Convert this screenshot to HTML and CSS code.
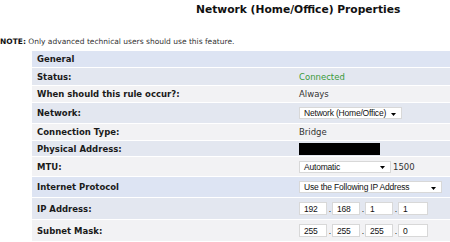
FILE: index.html
```html
<!DOCTYPE html>
<html>
<head>
<meta charset="utf-8">
<link rel="stylesheet" href="styles.css">
</head>
<body>
<div class="page">
  <div class="title">Network (Home/Office) Properties</div>
  <div class="note"><b>NOTE:</b> Only advanced technical users should use this feature.</div>
  <div class="table">
    <div class="row head h16"><div class="label">General</div><div class="value"></div></div>
    <div class="row blue h17"><div class="label">Status:</div><div class="value green">Connected</div></div>
    <div class="row light h16"><div class="label">When should this rule occur?:</div><div class="value">Always</div></div>
    <div class="row blue h20"><div class="label">Network:</div><div class="value"><span class="sel w103"><span class="txt">Network (Home/Office)</span><svg class="arr" width="5" height="3" viewBox="0 0 5 3"><path d="M0 0H5L2.5 3Z" fill="#000"/></svg></span></div></div>
    <div class="row light h16"><div class="label">Connection Type:</div><div class="value">Bridge</div></div>
    <div class="row blue h15"><div class="label">Physical Address:</div><div class="value"><span class="mask"></span></div></div>
    <div class="row light h19"><div class="label">MTU:</div><div class="value"><span class="sel w92"><span class="txt">Automatic</span><svg class="arr" width="5" height="3" viewBox="0 0 5 3"><path d="M0 0H5L2.5 3Z" fill="#000"/></svg></span><span class="after">1500</span></div></div>
    <div class="row head h20"><div class="label">Internet Protocol</div><div class="value"><span class="sel w143"><span class="txt">Use the Following IP Address</span><svg class="arr" width="5" height="3" viewBox="0 0 5 3"><path d="M0 0H5L2.5 3Z" fill="#000"/></svg></span></div></div>
    <div class="row blue h21"><div class="label">IP Address:</div><div class="value ip"><span class="box">192</span><span class="dot">.</span><span class="box">168</span><span class="dot">.</span><span class="box">1</span><span class="dot">.</span><span class="box">1</span></div></div>
    <div class="row light h21"><div class="label">Subnet Mask:</div><div class="value ip"><span class="box">255</span><span class="dot">.</span><span class="box">255</span><span class="dot">.</span><span class="box">255</span><span class="dot">.</span><span class="box">0</span></div></div>
  </div>
</div>
</body>
</html>
```
FILE: styles.css
```css
html, body {
  margin: 0;
  padding: 0;
  background: #fff;
}
body {
  font-family: "DejaVu Sans", Verdana, sans-serif;
  font-size: 8.5px;
  color: #222;
  overflow: hidden;
}
.page {
  width: 450px;
}
.title {
  height: 22px;
  line-height: 20px;
  padding-left: 196px;
  font-size: 10.7px;
  font-weight: bold;
  color: #111;
}
.note {
  height: 28px;
  padding-top: 14px;
  box-sizing: border-box;
  line-height: 12px;
  font-size: 7.5px;
  color: #333;
}
.note b {
  color: #111;
}
.table {
  margin: 1px 0 0 32px;
  width: 418px;
}
.row {
  display: flex;
  align-items: center;
  border-bottom: 1px solid #fff;
}
.h15 { height: 15px; }
.h16 { height: 16px; }
.h17 { height: 17px; }
.h19 { height: 19px; }
.h20 { height: 20px; }
.h21 { height: 21px; }
.head { background: #dde4f3; }
.blue { background: #e3e7f0; }
.light { background: #f2f2f4; }
.label {
  width: 262px;
  padding-left: 5px;
  box-sizing: border-box;
  font-weight: bold;
  color: #1a1a1a;
  flex: none;
}
.value {
  padding-left: 5px;
  display: flex;
  align-items: center;
  color: #333;
}
.green { color: #3a9a3a; }
.sel {
  display: inline-flex;
  align-items: center;
  justify-content: space-between;
  height: 12px;
  box-sizing: border-box;
  border: 1px solid #d8d8d8;
  background: #fff;
  padding: 0 5px 0 4px;
  font-family: "Liberation Sans", Arial, sans-serif;
  font-size: 8.5px;
  letter-spacing: -0.2px;
  color: #111;
  white-space: nowrap;
  overflow: hidden;
}
.txt {
  white-space: nowrap;
}
.w103 { width: 103px; }
.w92 { width: 92px; }
.w143 { width: 143px; }
.arr { flex: none; margin-left: 4px; margin-top: 2px; }
.after {
  margin-left: 2px;
  color: #333;
}
.mask {
  display: block;
  width: 81px;
  height: 12px;
  background: #000;
}
.ip {
  font-family: "Liberation Sans", Arial, sans-serif;
}
.box {
  display: inline-flex;
  align-items: center;
  width: 28px;
  height: 13px;
  box-sizing: border-box;
  border: 1px solid #d8d8d8;
  background: #fff;
  padding-left: 4px;
  color: #111;
  font-size: 8.5px;
  letter-spacing: -0.2px;
}
.box:last-child { width: 30px; }
.dot {
  width: 5px;
  text-align: right;
  padding-right: 1px;
  box-sizing: border-box;
  color: #111;
}
```
